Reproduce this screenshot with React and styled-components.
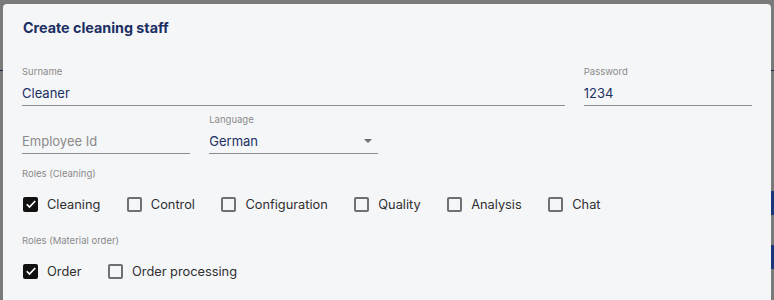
import React from 'react'
import styled, { createGlobalStyle } from 'styled-components'

const GlobalStyle = createGlobalStyle`
  html, body {
    margin: 0;
    padding: 0;
    height: 100%;
    overflow: hidden;
    background: #7a7a7a;
    font-family: Inter, 'Noto Sans', Arial, sans-serif;
  }
`

const roleCleaning = [
  { name: 'Cleaning', checked: true },
  { name: 'Control' },
  { name: 'Configuration' },
  { name: 'Quality' },
  { name: 'Analysis' },
  { name: 'Chat' }
]

const roleMaterial = [{ name: 'Order', checked: true }, { name: 'Order processing' }]

export default function App() {
  return (
    <>
      <GlobalStyle />
      <Backdrop>
        <PageHeader />
        <PageActions>
          <DimButton />
          <DimButton />
        </PageActions>
      </Backdrop>

      <Dialog>
        <Title>Create cleaning staff</Title>
        <Form>
          <Field span={3}>
            <Label>Surname</Label>
            <Value>Cleaner</Value>
          </Field>
          <Field>
            <Label>Password</Label>
            <Value>1234</Value>
          </Field>

          <Field>
            <Label />
            <Value placeholder>Employee Id</Value>
          </Field>
          <Field>
            <Label>Language</Label>
            <Value>
              German
              <Arrow />
            </Value>
          </Field>
        </Form>

        <GroupLabel>Roles (Cleaning)</GroupLabel>
        <CheckRow>
          {roleCleaning.map((r) => (
            <CheckItem key={r.name}>
              <Box checked={r.checked}>{r.checked && <Tick />}</Box>
              <span>{r.name}</span>
            </CheckItem>
          ))}
        </CheckRow>

        <GroupLabel>Roles (Material order)</GroupLabel>
        <CheckRow>
          {roleMaterial.map((r) => (
            <CheckItem key={r.name}>
              <Box checked={r.checked}>{r.checked && <Tick />}</Box>
              <span>{r.name}</span>
            </CheckItem>
          ))}
        </CheckRow>
      </Dialog>
    </>
  )
}

const Tick = () => (
  <svg width="12" height="12" viewBox="0 0 24 24">
    <path d="M3.5 12.5l5.5 5.5L20.5 6" fill="none" stroke="#fff" strokeWidth="3.4" />
  </svg>
)

const Backdrop = styled.div`
  width: 100%;
  height: 300px;
  display: flex;
  flex-direction: column;
`

const PageHeader = styled.div`
  height: 70px;
  border-bottom: 1px solid #1a2744;
`

const PageActions = styled.div`
  display: flex;
  flex-direction: column;
  align-items: flex-end;
  gap: 30px;
  padding-top: 120px;
`

const DimButton = styled.div`
  width: 60px;
  height: 24px;
  background: #1b3578;
`

const Dialog = styled.div`
  position: fixed;
  top: 4px;
  left: 3px;
  right: 3px;
  bottom: -20px;
  background: #f5f6f8;
  border-radius: 4px;
  padding: 0 19px;
  box-sizing: border-box;
`

const Title = styled.h2`
  margin: 0;
  padding: 15px 1px 0;
  height: 61px;
  box-sizing: border-box;
  font-size: 14.3px;
  font-weight: 700;
  color: #1b2f63;
`

const Form = styled.div`
  display: grid;
  grid-template-columns: repeat(4, 1fr);
  column-gap: 19px;
  row-gap: 7px;
`

const Field = styled.div`
  grid-column: span ${({ span }) => span || 1};
  display: flex;
  flex-direction: column;
  border-bottom: 1px solid #8d8d8d;
`

const Label = styled.div`
  height: 14px;
  font-size: 9.5px;
  line-height: 14px;
  color: #8a8a8a;
`

const Value = styled.div`
  position: relative;
  height: 26px;
  line-height: 28px;
  font-size: 13px;
  color: ${({ placeholder }) => (placeholder ? '#8a8a8a' : '#1b2f63')};
`

const Arrow = styled.span`
  position: absolute;
  right: 6px;
  top: 12px;
  border-left: 4.5px solid transparent;
  border-right: 4.5px solid transparent;
  border-top: 4.5px solid #6f6f6f;
`

const GroupLabel = styled.div`
  margin-top: 13px;
  font-size: 9.5px;
  line-height: 14px;
  color: #8a8a8a;
`

const CheckRow = styled.div`
  display: flex;
  align-items: center;
  gap: 26.5px;
  height: 34px;
  margin-top: 6px;
  padding-left: 1px;
`

const CheckItem = styled.label`
  display: flex;
  align-items: center;
  gap: 9px;
  font-size: 12.8px;
  color: #2f2f2f;
`

const Box = styled.span`
  width: 15px;
  height: 15px;
  box-sizing: border-box;
  border-radius: 2px;
  display: flex;
  align-items: center;
  justify-content: center;
  border: ${({ checked }) => (checked ? 'none' : '2px solid #707070')};
  background: ${({ checked }) => (checked ? '#111' : 'transparent')};
`
